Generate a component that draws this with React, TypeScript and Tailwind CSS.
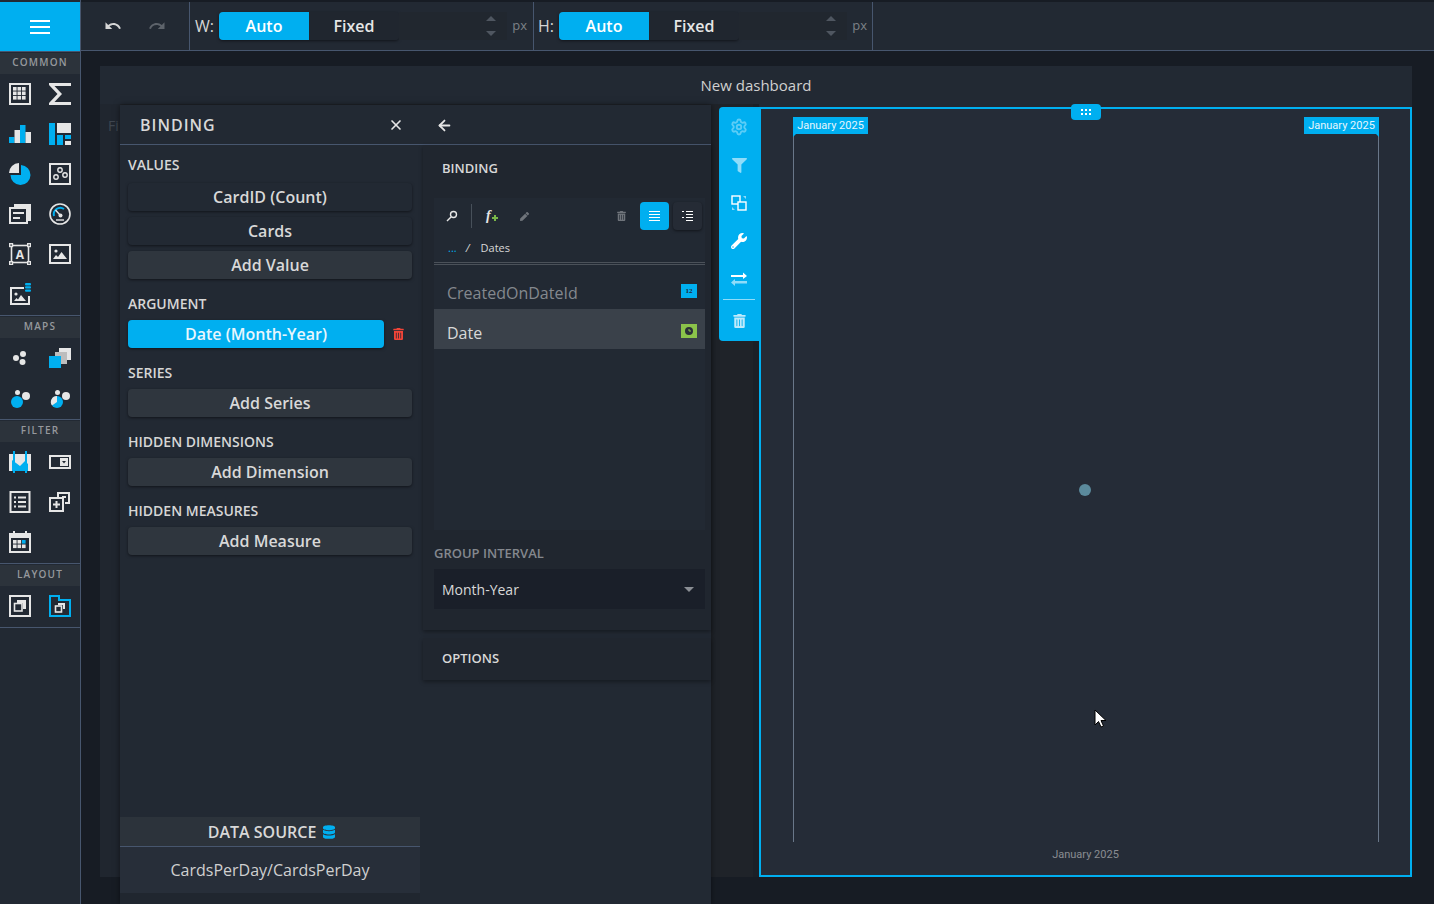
import { ArrowLeft, Settings, X } from "lucide-react";
import { FaDatabase, FaFilter, FaPen, FaTrashAlt, FaWrench } from "react-icons/fa";
import { MdRedo, MdUndo } from "react-icons/md";

const W = "#e6e6e6";
const B = "#00aff0";

function Svg({ children, size = 22 }: { children: React.ReactNode; size?: number }) {
  return (
    <svg width={size} height={size} viewBox="0 0 22 22">
      {children}
    </svg>
  );
}

const sidebarIcons: Record<string, React.ReactNode> = {
  grid: (
    <>
      <rect x="1" y="1" width="20" height="20" fill="none" stroke={W} strokeWidth="2" />
      {[4, 8.5, 13].map((x) =>
        [4, 8.5, 13].map((y) => <rect key={`${x}-${y}`} x={x} y={y} width="3.6" height="3.6" fill={W} />),
      )}
    </>
  ),
  sigma: <path d="M0 0H22V3H5.5L13 11L5.5 19H22V22H0V20L8.5 11L0 2Z" fill={W} />,
  bars: (
    <>
      <rect x="0" y="14" width="5.5" height="6" fill={B} />
      <rect x="5.5" y="7" width="5.5" height="13" fill={W} />
      <rect x="11" y="2" width="5.5" height="18" fill={B} />
      <rect x="16.5" y="9" width="5.5" height="11" fill={W} />
    </>
  ),
  treemap: (
    <>
      <rect x="0" y="0" width="6" height="22" fill={B} />
      <rect x="8" y="0" width="14" height="10" fill={W} />
      <rect x="8" y="12" width="6" height="10" fill={B} />
      <rect x="16" y="12" width="6" height="4" fill={B} />
      <rect x="16" y="18" width="6" height="4" fill={W} />
    </>
  ),
  pie: (
    <>
      <path d="M12 2A10 10 0 1 1 1.5 12H12Z" fill={B} />
      <path d="M10 0V10H0A10 10 0 0 1 10 0Z" fill={W} />
    </>
  ),
  scatter: (
    <>
      <rect x="1" y="1" width="20" height="20" fill="none" stroke={W} strokeWidth="2" />
      <circle cx="11" cy="7" r="2.2" fill="none" stroke={W} strokeWidth="1.4" />
      <circle cx="16" cy="12" r="2.2" fill="none" stroke={W} strokeWidth="1.4" />
      <circle cx="7" cy="14" r="2.2" fill="none" stroke={W} strokeWidth="1.4" />
    </>
  ),
  card: (
    <>
      <path d="M5 1H22V18H19V4H5Z" fill={W} />
      <rect x="1" y="5" width="17" height="15" fill="#222933" stroke={W} strokeWidth="2" />
      <rect x="4" y="9" width="11" height="2" fill={W} />
      <rect x="4" y="14" width="7" height="2" fill={W} />
    </>
  ),
  gauge: (
    <>
      <circle cx="11" cy="11" r="10" fill="none" stroke={W} strokeWidth="1.6" />
      <path d="M5 13A6.5 6.5 0 0 1 15 6" fill="none" stroke={B} strokeWidth="2" />
      <path d="M6.5 7L11 12" stroke={W} strokeWidth="1.4" />
      <circle cx="11.5" cy="12.5" r="2" fill={W} />
      <path d="M7 17H15" stroke={W} strokeWidth="1.4" />
    </>
  ),
  text: (
    <>
      <rect x="2.5" y="2.5" width="17" height="17" fill="none" stroke={W} strokeWidth="1.6" />
      {[[0, 0], [18, 0], [0, 18], [18, 18]].map(([x, y]) => (
        <rect key={`${x}${y}`} x={x + 0.7} y={y + 0.7} width="2.8" height="2.8" fill="#222933" stroke={W} strokeWidth="1.4" />
      ))}
      <text x="11" y="15.5" textAnchor="middle" fontSize="12" fontWeight="700" fontFamily="Open Sans, sans-serif" fill={W}>
        A
      </text>
    </>
  ),
  image: (
    <>
      <rect x="1" y="2" width="20" height="18" fill="none" stroke={W} strokeWidth="2" />
      <circle cx="7" cy="8" r="1.6" fill={W} />
      <path d="M4 16L7 12L9 14L12.5 9L18 16Z" fill={W} />
    </>
  ),
  imageDb: (
    <>
      <path d="M15 4H1V22H21V13H19V20H3V6H15Z" fill={W} />
      <circle cx="7" cy="11" r="1.6" fill={W} />
      <path d="M5 18L7.5 15L9 16.5L12 12L17 18Z" fill={W} />
      <rect x="16" y="0" width="6" height="2.4" rx="1" fill={B} />
      <rect x="16" y="3.2" width="6" height="2.4" rx="1" fill={B} />
      <rect x="16" y="6.4" width="6" height="2.4" rx="1" fill={B} />
    </>
  ),
  dots: (
    <>
      <circle cx="7" cy="11" r="3" fill={W} />
      <circle cx="14" cy="7" r="3" fill={W} />
      <circle cx="13.5" cy="15" r="3" fill={W} />
    </>
  ),
  squares: (
    <>
      <rect x="10" y="1" width="12" height="12" fill={W} />
      <rect x="6" y="5" width="12" height="12" fill="#bdbdbd" />
      <rect x="0" y="9" width="12" height="12" fill={B} />
    </>
  ),
  bubbles: (
    <>
      <circle cx="8" cy="15" r="6" fill={B} />
      <circle cx="8.5" cy="5.5" r="2.5" fill={W} />
      <circle cx="17" cy="9" r="4" fill={W} />
    </>
  ),
  pieBubbles: (
    <>
      <circle cx="8" cy="15" r="6" fill={B} />
      <path d="M8 15V9A6 6 0 0 0 3 18.5Z" fill={W} />
      <circle cx="8.5" cy="5.5" r="2.5" fill={W} />
      <circle cx="17" cy="9" r="4" fill={W} />
    </>
  ),
  range: (
    <>
      <rect x="0" y="3" width="22" height="17" fill={W} />
      <path d="M3 9L7 12L11 15L16 10L19 13V20H3Z" fill={B} />
      <rect x="4" y="0" width="2" height="22" fill={B} />
      <rect x="16" y="0" width="2" height="22" fill={B} />
    </>
  ),
  combo: (
    <>
      <rect x="1" y="5" width="20" height="12" fill="none" stroke={W} strokeWidth="2" />
      <rect x="11" y="7" width="8" height="8" fill={W} />
      <path d="M13 10H17L15 12.5Z" fill="#222933" />
    </>
  ),
  list: (
    <>
      <rect x="1.5" y="1" width="19" height="20" fill="none" stroke={W} strokeWidth="2" />
      {[5.5, 10, 14.5].map((y) => (
        <g key={y}>
          <rect x="5" y={y} width="2" height="2" fill={W} />
          <rect x="9" y={y} width="8" height="2" fill={W} />
        </g>
      ))}
    </>
  ),
  tree: (
    <>
      <path d="M8 6V1H21V13H16V11H19V3H10V6Z" fill={W} />
      <rect x="1" y="7" width="13" height="13" fill="none" stroke={W} strokeWidth="2" />
      <path d="M6.5 10H8.5V12.5H11V14.5H8.5V17H6.5V14.5H4V12.5H6.5Z" fill={W} />
      <rect x="13" y="5" width="4" height="2" fill={W} />
    </>
  ),
  calendar: (
    <>
      <rect x="1" y="3" width="20" height="18" fill="none" stroke={W} strokeWidth="2" />
      <rect x="1" y="3" width="20" height="4" fill={W} />
      <rect x="4" y="0" width="2" height="4" fill={W} />
      <rect x="16" y="0" width="2" height="4" fill={W} />
      {[4, 8.5, 13].map((x) =>
        [9, 13.5].map((y) => (
          <rect key={`${x}-${y}`} x={x} y={y} width="3.6" height="3.6" fill={x === 13 && y === 9 ? B : W} />
        )),
      )}
    </>
  ),
  group: (
    <>
      <rect x="1" y="1" width="20" height="20" fill="none" stroke={W} strokeWidth="2" />
      <path d="M8 5H17V14H14V8H8Z" fill={W} />
      <rect x="5.5" y="8.5" width="7.5" height="7.5" fill="none" stroke={W} strokeWidth="1.6" />
    </>
  ),
  tab: (
    <>
      <path d="M1 1H10V5H21V21H1Z" fill="none" stroke={B} strokeWidth="2" />
      <path d="M9 8H16V14H14V10H9Z" fill={W} />
      <rect x="6.5" y="11" width="6" height="6" fill="none" stroke={W} strokeWidth="1.6" />
    </>
  ),
};

const sections = [
  { title: "COMMON", icons: ["grid", "sigma", "bars", "treemap", "pie", "scatter", "card", "gauge", "text", "image", "imageDb"] },
  { title: "MAPS", icons: ["dots", "squares", "bubbles", "pieBubbles"] },
  { title: "FILTER", icons: ["range", "combo", "list", "tree", "calendar"] },
  { title: "LAYOUT", icons: ["group", "tab"] },
];

function Sidebar() {
  return (
    <aside className="w-[81px] shrink-0 border-r border-[#47566e] bg-[#222933]">
      <div className="mt-[2px] flex h-[50px] flex-col items-center justify-center gap-[4px] border-b border-[#47566e] bg-[#00aff0]">
        <span className="h-[2px] w-5 bg-white" />
        <span className="h-[2px] w-5 bg-white" />
        <span className="h-[2px] w-5 bg-white" />
      </div>
      {sections.map((s) => (
        <div key={s.title} className="border-b border-[#47566e]">
          <div className="mt-[1px] flex h-[21px] items-center justify-center bg-[#2c333b] pb-[2px] text-[10px] font-semibold tracking-[1.2px] text-[#96999d]">
            {s.title}
          </div>
          <div className="grid grid-cols-2">
            {s.icons.map((name) => (
              <div key={name} className="flex h-10 items-center justify-center">
                <Svg>{sidebarIcons[name]}</Svg>
              </div>
            ))}
          </div>
          <div className="h-[1px]" />
        </div>
      ))}
    </aside>
  );
}

function Segmented() {
  return (
    <div className="ml-[5px] flex h-7 w-[180px] shrink-0 overflow-hidden rounded text-base font-semibold shadow-[0_1px_3px_rgba(0,0,0,0.5)]">
      <div className="flex w-[90px] items-center justify-center bg-[#00aff0] text-white">Auto</div>
      <div className="flex w-[90px] items-center justify-center bg-[#20262f] text-[#e6e6e6]">Fixed</div>
    </div>
  );
}

function SizeField({ label, className }: { label: string; className: string }) {
  return (
    <div className={`flex h-full shrink-0 items-center border-r border-[#47566e] ${className}`}>
      <span className="text-base text-[#d6d6d6]">{label}</span>
      <Segmented />
      <div className="flex h-7 flex-1 items-center justify-end bg-[#21272f] pr-[11px]">
        <div className="flex flex-col gap-[10px]">
          <span className="block h-0 w-0 border-x-[5px] border-b-[5px] border-x-transparent border-b-[#4f5660]" />
          <span className="block h-0 w-0 border-x-[5px] border-t-[5px] border-x-transparent border-t-[#4f5660]" />
        </div>
      </div>
      <span className="ml-[5px] text-[13px] text-[#7d8187]">px</span>
    </div>
  );
}

function TopBar() {
  return (
    <div className="mt-[2px] flex h-[49px] shrink-0 items-center border-b border-[#47566e] bg-[#222933]">
      <div className="flex h-full w-[109px] shrink-0 items-center gap-[26px] border-r border-[#47566e] pl-[23px]">
        <MdUndo className="h-[18px] w-[18px] text-[#d6d6d6]" />
        <MdRedo className="h-[18px] w-[18px] text-[#5d636b]" />
      </div>
      <SizeField label="W:" className="w-[344px] pl-[5px] pr-[6px]" />
      <SizeField label="H:" className="w-[339px] pl-[4px] pr-[5px]" />
    </div>
  );
}

function FieldLabel({ children }: { children: React.ReactNode }) {
  return <div className="flex h-5 items-center text-sm font-semibold text-[#d6d6d6]">{children}</div>;
}

function BindButton({ children, add }: { children: React.ReactNode; add?: boolean }) {
  return (
    <div
      className={`flex h-7 items-center justify-center rounded text-base font-semibold text-[#d8d8d8] shadow-[0_1px_3px_rgba(0,0,0,0.5)] ${
        add ? "bg-[#2f363e]" : "bg-[#222933]"
      }`}
    >
      {children}
    </div>
  );
}

function BindingLeft() {
  return (
    <div className="flex h-full w-[300px] shrink-0 flex-col bg-[#222933]">
      <div className="flex h-10 shrink-0 items-center justify-between border-b border-[#47566e] pl-5 pr-[16px] pt-[1px]">
        <span className="text-base font-semibold tracking-[1px] text-[#d8d8d8]">BINDING</span>
        <X className="h-[16px] w-[16px] text-[#e6e6e6]" strokeWidth={2.5} />
      </div>
      <div className="flex flex-1 flex-col px-2 pt-[10px]">
        <FieldLabel>VALUES</FieldLabel>
        <div className="mt-2 flex flex-col gap-[6px]">
          <BindButton>CardID (Count)</BindButton>
          <BindButton>Cards</BindButton>
          <BindButton add>Add Value</BindButton>
        </div>
        <div className="mt-[15px]">
          <FieldLabel>ARGUMENT</FieldLabel>
        </div>
        <div className="mt-[6px] flex items-center">
          <div className="flex h-7 w-[256px] items-center justify-center rounded bg-[#00aff0] text-base font-semibold text-[#e8f6fd] shadow-[0_1px_3px_rgba(0,0,0,0.5)]">
            Date (Month-Year)
          </div>
          <FaTrashAlt className="ml-[9px] h-[12px] w-[11px] text-[#f04438]" />
        </div>
        <div className="mt-[15px]">
          <FieldLabel>SERIES</FieldLabel>
        </div>
        <div className="mt-[6px]">
          <BindButton add>Add Series</BindButton>
        </div>
        <div className="mt-[15px]">
          <FieldLabel>HIDDEN DIMENSIONS</FieldLabel>
        </div>
        <div className="mt-[6px]">
          <BindButton add>Add Dimension</BindButton>
        </div>
        <div className="mt-[15px]">
          <FieldLabel>HIDDEN MEASURES</FieldLabel>
        </div>
        <div className="mt-[6px]">
          <BindButton add>Add Measure</BindButton>
        </div>
      </div>
      <div className="flex h-[30px] shrink-0 items-center justify-center gap-[7px] border-b border-[#47566e] bg-[#2c333b] pl-[3px] text-base font-semibold text-[#d8d8d8]">
        DATA SOURCE
        <FaDatabase className="h-[14px] w-[12px] text-[#00aff0]" />
      </div>
      <div className="flex h-[46px] shrink-0 items-center justify-center bg-[#272e39] text-base text-[#d0d0d0]">
        CardsPerDay/CardsPerDay
      </div>
      <div className="h-[11px] shrink-0 bg-[#20262f]" />
    </div>
  );
}

function BindingRight() {
  return (
    <div className="flex h-full flex-1 flex-col bg-[#222933]">
      <div className="flex h-10 shrink-0 items-center border-b border-[#47566e] pl-[16px] pt-[1px]">
        <ArrowLeft className="h-[17px] w-[17px] text-[#e6e6e6]" strokeWidth={2.5} />
      </div>
      <div className="ml-[3px] flex h-[485px] shrink-0 flex-col bg-[#20262f] shadow-[0_2px_4px_rgba(0,0,0,0.35)]">
        <div className="mb-[6px] flex h-[47px] shrink-0 items-center pl-[19px] text-[13px] font-semibold text-[#d8d8d8]">BINDING</div>
        <div className="ml-[11px] mr-[6px] flex h-[332px] shrink-0 flex-col bg-[#222933]">
          <div className="flex h-[36px] shrink-0 items-center">
            <span className="ml-[11px] flex w-[13px] justify-center">
              <svg width="12" height="12" viewBox="0 0 12 12" fill="none" stroke="#e6e6e6" strokeWidth="1.4">
                <circle cx="7.5" cy="4.5" r="3" />
                <path d="M5 7L1 11" />
              </svg>
            </span>
            <span className="ml-[13px] h-6 w-px bg-[#47505a]" />
            <span className="relative ml-[14px] w-[14px] font-['Liberation_Serif',serif] text-[14px] font-bold italic leading-none text-[#e6e6e6]">
              f
              <svg className="absolute left-[6px] top-[6px]" width="6" height="6" viewBox="0 0 6 6">
                <path d="M2 0H4V2H6V4H4V6H2V4H0V2H2Z" fill="#7ab648" />
              </svg>
            </span>
            <FaPen className="ml-[20px] h-[9px] w-[9px] text-[#6f747b]" />
            <div className="flex-1" />
            <FaTrashAlt className="h-[10px] w-[9px] text-[#6f747b]" />
            <span className="ml-[14px] flex h-7 w-[29px] items-center justify-center rounded bg-[#00aff0]">
              <span className="flex flex-col gap-[2px]">
                {[0, 1, 2, 3].map((i) => (
                  <span key={i} className="block h-px w-[11px] bg-white" />
                ))}
              </span>
            </span>
            <span className="ml-[4px] mr-[3px] flex h-7 w-[29px] items-center justify-center rounded bg-[#252b35] shadow-[0_1px_3px_rgba(0,0,0,0.5)]">
              <span className="flex flex-col gap-[2px]">
                {[true, false, true, false].map((dot, i) => (
                  <span key={i} className="flex w-[11px] justify-between">
                    <span className={`block h-px w-[2px] ${dot ? "bg-white" : "bg-transparent"}`} />
                    <span className="block h-px w-[7px] bg-white" />
                  </span>
                ))}
              </span>
            </span>
          </div>
          <div className="flex h-[31px] shrink-0 items-center border-b-[3px] border-double border-[#4b5159] pl-[14px] text-[11px] text-[#d8d8d8]">
            <span className="text-[#00aff0]">...</span>
            <span className="ml-[9px] italic">/</span>
            <span className="ml-[11px]">Dates</span>
          </div>
          <div className="mt-[8px] flex h-[36px] shrink-0 items-center justify-between pl-[13px] pr-2 text-base text-[#84888e]">
            <span className="pt-[4px]">CreatedOnDateId</span>
            <span className="flex h-[14px] w-4 items-center justify-center bg-[#00aff0] font-['Liberation_Serif',serif] text-[7px] font-bold text-[#1f2630]">
              12
            </span>
          </div>
          <div className="flex h-10 shrink-0 items-center justify-between bg-[#3a414a] pl-[13px] pr-2 text-base text-[#d8d8d8]">
            <span className="pt-[8px]">Date</span>
            <span className="mt-[4px] flex h-[14px] w-4 items-center justify-center bg-[#8bc34a]">
              <svg width="8" height="8" viewBox="0 0 8 8">
                <circle cx="4" cy="4" r="4" fill="#2b3039" />
                <path d="M4 2V4H6" stroke="#8bc34a" fill="none" />
              </svg>
            </span>
          </div>
        </div>
        <div className="ml-[11px] mt-[14px] text-[13px] font-semibold leading-[18px] text-[#84888e]">GROUP INTERVAL</div>
        <div className="ml-[11px] mr-[6px] mt-[7px] flex h-10 shrink-0 items-center justify-between bg-[#1a1f29] pl-2 pr-[11px] pt-[1px] text-sm text-[#d8d8d8]">
          Month-Year
          <span className="h-0 w-0 border-x-[5px] border-t-[5px] border-x-transparent border-t-[#8a8e94]" />
        </div>
      </div>
      <div className="ml-[3px] mt-[8px] flex h-[42px] shrink-0 items-center bg-[#20262f] pl-[19px] text-[13px] font-semibold text-[#d8d8d8] shadow-[0_2px_4px_rgba(0,0,0,0.35)]">
        OPTIONS
      </div>
    </div>
  );
}

function ItemToolbar() {
  return (
    <div className="absolute left-[-42px] top-[-2px] flex h-[234px] w-[42px] flex-col items-center rounded-l bg-[#00aff0] pr-[2px] pt-[11px]">
      <Settings className="h-[18px] w-[18px] text-[#5ccdf6]" strokeWidth={2.5} />
      <FaFilter className="mt-[22px] h-[15px] w-[15px] text-[#8fdcf9]" />
      <svg className="mt-[22px]" width="16" height="16" viewBox="0 0 16 16" fill="none">
        <rect x="1" y="1" width="8" height="8" stroke="#fff" strokeWidth="1.4" />
        <rect x="7" y="7" width="8" height="8" stroke="#fff" strokeWidth="1.4" fill="#00aff0" />
        <path d="M12 1L15 1V4Z M1 12V15H4Z" fill="#8fdcf9" />
      </svg>
      <FaWrench className="mt-[22px] h-[16px] w-[16px] text-white" />
      <svg className="mt-[23px]" width="16" height="14" viewBox="0 0 16 14">
        <path d="M0 3H12V0.5L16 4L12 7V5H0Z" fill="#fff" />
        <path d="M16 9H4V7L0 10.5L4 14V11.5H16Z" fill="#8fdcf9" />
      </svg>
      <div className="mt-[13px] h-px w-8 bg-[#8fdcf9]" />
      <FaTrashAlt className="mt-[14px] h-[14px] w-[13px] text-[#bfeafb]" />
    </div>
  );
}

function ChartItem() {
  return (
    <div className="relative mt-[3px] h-[770px] w-[653px] shrink-0 border-2 border-[#00aff0] bg-[#252c37]">
      <ItemToolbar />
      <div className="absolute left-[310px] top-[-5px] flex h-[16px] w-[30px] items-center justify-center rounded-sm bg-[#00aff0]">
        <span className="grid grid-cols-3 gap-x-[2px] gap-y-[2px]">
          {[0, 1, 2, 3, 4, 5].map((i) => (
            <span key={i} className="h-[2px] w-[2px] bg-white" />
          ))}
        </span>
      </div>
      <svg className="absolute left-0 top-0" width="649" height="766" viewBox="0 0 649 766">
        <path d="M32.5 24V733M617.5 24V733" stroke="#697789" strokeWidth="1" />
        <path d="M32 24L36 24L32 28Z M618 24L614 24L618 28Z" fill="#00aff0" />
        <circle cx="324" cy="381" r="6" fill="#5b8a9c" />
      </svg>
      <div className="absolute left-[32px] top-[8px] flex h-[17px] w-[75px] items-center justify-center bg-[#00aff0] pt-[1px] font-['Roboto',sans-serif] text-[11px] text-[#e6f6fd]">
        January 2025
      </div>
      <div className="absolute left-[543px] top-[8px] flex h-[17px] w-[75px] items-center justify-center bg-[#00aff0] pt-[1px] font-['Roboto',sans-serif] text-[11px] text-[#e6f6fd]">
        January 2025
      </div>
      <div className="absolute left-0 top-[738px] w-full text-center font-['Roboto',sans-serif] text-[11px] text-[#8a8d92]">
        January 2025
      </div>
      <svg className="absolute left-[333px] top-[600px]" width="13" height="20" viewBox="0 0 13 20">
        <path d="M1 1V16L4.5 12.5L7 18L9.5 17L7 11.5H12Z" fill="#fff" stroke="#000" strokeWidth="1" />
      </svg>
    </div>
  );
}

export default function App() {
  return (
    <div className="relative flex h-[904px] w-[1434px] overflow-hidden bg-[#171c24] font-['Open_Sans',sans-serif]">
      <Sidebar />
      <div className="flex min-w-0 flex-1 flex-col">
        <TopBar />
        <div className="flex-1 pb-[27px] pl-[19px] pr-[22px] pt-[15px]">
          <div className="flex h-full flex-col bg-[#222933]">
            <div className="flex h-[38px] shrink-0 items-center justify-center text-[15px] text-[#d0d0d0]">New dashboard</div>
            <div className="flex min-h-0 flex-1">
              <div className="w-[20px] shrink-0 whitespace-nowrap bg-[#20262f] pl-2 pt-[12px] text-sm text-[#3f4650]">Fi</div>
              <div className="flex-1 border-r-[6px] border-[#1b2027] bg-[#1f2329]" />
              <ChartItem />
            </div>
          </div>
        </div>
      </div>
      {/* Binding panel floats above the dashboard */}
      <div className="absolute left-[120px] top-[105px] flex h-[799px] w-[591px] shadow-[0_0_6px_rgba(0,0,0,0.5)]">
        <BindingLeft />
        <BindingRight />
      </div>
    </div>
  );
}
